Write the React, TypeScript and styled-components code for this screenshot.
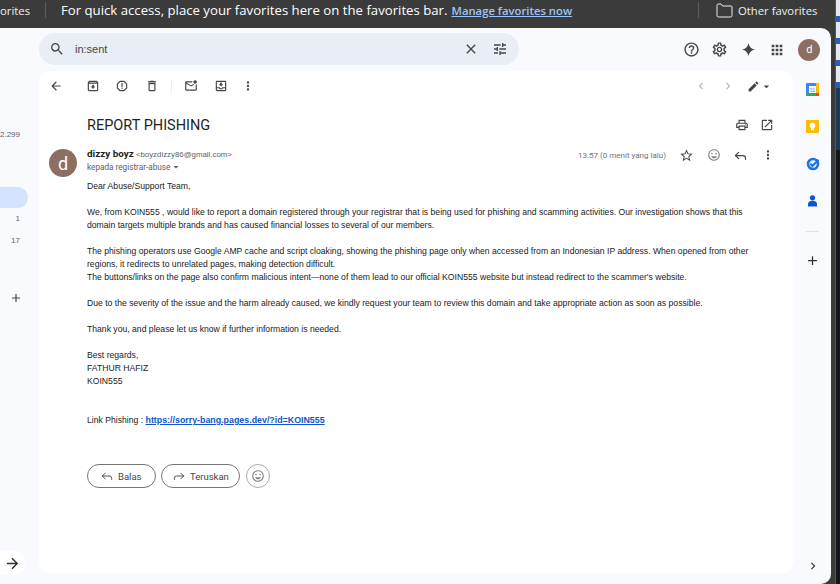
import React from "react";
import styled, { createGlobalStyle } from "styled-components";
import { Forward, Reply } from "lucide-react";
import {
  MdAdd,
  MdApps,
  MdArrowBack,
  MdArrowDropDown,
  MdArrowForward,
  MdChevronLeft,
  MdChevronRight,
  MdClose,
  MdEdit,
  MdHelpOutline,
  MdMoreVert,
  MdOpenInNew,
  MdOutlineArchive,
  MdOutlineDelete,
  MdOutlineInsertEmoticon,
  MdOutlineMarkEmailUnread,
  MdOutlineMoveToInbox,
  MdOutlineReport,
  MdOutlineSettings,
  MdOutlinePrint,
  MdSearch,
  MdStarBorder,
  MdTune
} from "react-icons/md";

const GlobalStyle = createGlobalStyle`
  html, body {
    margin: 0;
    padding: 0;
    width: 840px;
    height: 584px;
    overflow: hidden;
    background: #14181f;
  }
`;

const Screen = styled.div`
  width: 840px;
  height: 584px;
  display: flex;
  overflow: hidden;
  font-family: "Liberation Sans", Arial, sans-serif;
`;

const BrowserWindow = styled.div`
  width: 835px;
  height: 584px;
  flex: none;
  display: flex;
  flex-direction: column;
  background: #3b3b3b;
`;

const BehindWindow = styled.div`
  flex: 1;
  background: #12161d;
  border-left: 1px solid #555;
  display: flex;
  flex-direction: column;
`;

const BehindLink = styled.div`
  height: 22px;
  flex: none;
  background: #e4e8ef;
  border-bottom: 6px solid #2a5fc0;
  box-sizing: border-box;
  &:last-of-type {
    margin-bottom: 200px;
  }
`;

const BehindSelection = styled.div`
  height: 62px;
  flex: none;
  background: #1d3a58;
`;

const FavoritesBar = styled.div`
  height: 28px;
  flex: none;
  box-sizing: border-box;
  padding-bottom: 8px;
  display: flex;
  align-items: center;
  color: #fff;
  font-family: "Open Sans", sans-serif;
  font-size: 13.2px;
  background: #3b3b3b;
`;

const BarLabel = styled.span`
  width: 45px;
  font-size: 11.3px;
  color: #f0f0f0;
  flex: none;
`;

const BarDivider = styled.span`
  width: 1px;
  height: 16px;
  flex: none;
  background: #5c5c5c;
`;

const BarMessage = styled.span`
  margin-left: 15px;
  white-space: nowrap;
  width: 637px;
  flex: none;
`;

const ManageLink = styled.a`
  margin-left: 4px;
  color: #9cc4f5;
  text-decoration: underline;
  font-size: 11.3px;
  font-weight: 600;
`;

const OtherFavorites = styled.span`
  margin-left: 17px;
  display: flex;
  align-items: center;
  gap: 5px;
  font-size: 11.3px;
  white-space: nowrap;
  color: #f0f0f0;
`;

const Page = styled.div`
  flex: 1;
  margin-right: 4px;
  min-height: 0;
  display: flex;
  flex-direction: column;
  background: #f8fafd;
  border-radius: 0 10px 10px 0;
  overflow: hidden;
`;

const TopRow = styled.header`
  height: 43px;
  flex: none;
  display: flex;
  align-items: flex-start;
  padding-top: 5px;
  box-sizing: border-box;
`;

const SearchBox = styled.div`
  width: 480px;
  height: 32px;
  margin-left: 39px;
  flex: none;
  box-sizing: border-box;
  padding: 0 11px 0 10px;
  display: flex;
  align-items: center;
  border-radius: 16px;
  background: #e9eef6;
  color: #444746;
  font-size: 11px;
`;

const SearchText = styled.span`
  flex: 1;
  margin-left: 10px;
`;

const SearchActions = styled.span`
  display: flex;
  align-items: center;
  gap: 13px;
`;

const AccountIcons = styled.div`
  margin-left: 158px;
  display: flex;
  align-items: center;
  height: 33px;
  color: #444746;
`;

const AccountSlot = styled.span<{ $wide?: boolean }>`
  width: ${(p) => (p.$wide ? 36 : 28.6)}px;
  display: flex;
  justify-content: center;
`;

const Avatar = styled.span<{ $size: number; $font: number }>`
  width: ${(p) => p.$size}px;
  height: ${(p) => p.$size}px;
  flex: none;
  display: flex;
  align-items: center;
  justify-content: center;
  border-radius: 50%;
  background: #8d6e63;
  color: #fff;
  font-size: ${(p) => p.$font}px;
  font-family: Roboto, sans-serif;
`;

const Workspace = styled.div`
  flex: 1;
  min-height: 0;
  display: flex;
  padding-bottom: 11px;
`;

const Sidebar = styled.nav`
  width: 39px;
  flex: none;
  display: flex;
  flex-direction: column;
  color: #5f6368;
  font-size: 8px;
`;

const Count = styled.div<{ $top: number }>`
  margin-top: ${(p) => p.$top}px;
  width: 20px;
  height: 10px;
  line-height: 10px;
  text-align: right;
`;

const ActiveItem = styled.div`
  margin-top: 47px;
  width: 28px;
  height: 21px;
  border-radius: 0 11px 11px 0;
  background: #d3e3fd;
`;

const SidebarPlus = styled.div`
  margin: 45px 0 0 9px;
  height: 14px;
  color: #444746;
`;

const ExpandButton = styled.div`
  margin-top: auto;
  width: 25px;
  height: 24px;
  margin-bottom: -2px;
  border-radius: 0 12px 12px 0;
  background: #fff;
  display: flex;
  align-items: center;
  padding-left: 4px;
  box-sizing: border-box;
  color: #303030;
`;

const MailCard = styled.main`
  width: 755px;
  flex: none;
  display: flex;
  flex-direction: column;
  border-radius: 12px;
  background: #fff;
`;

const Toolbar = styled.div`
  height: 30px;
  flex: none;
  display: flex;
  align-items: center;
  color: #444746;
`;

const ToolIcon = styled.span<{ $left: number; $faded?: boolean }>`
  margin-left: ${(p) => p.$left}px;
  display: flex;
  color: ${(p) => (p.$faded ? "#b4b7bb" : "inherit")};
`;

const ToolDivider = styled.span`
  margin-left: 12px;
  width: 1px;
  height: 13px;
  background: #eceef0;
`;

const SubjectRow = styled.div`
  height: 45px;
  flex: none;
  display: flex;
  align-items: center;
  padding: 0 20px 0 48px;
  margin-top: 1px;
`;

const Subject = styled.h1`
  flex: 1;
  margin: 2px 0 0;
  font-family: Roboto, sans-serif;
  font-weight: 400;
  font-size: 14.5px;
  color: #1f1f1f;
`;

const SubjectActions = styled.div`
  display: flex;
  gap: 11px;
  color: #444746;
`;

const MessageArea = styled.div`
  display: flex;
  padding: 0 13px 0 10px;
`;

const SenderAvatarSlot = styled.div`
  width: 38px;
  flex: none;
  padding-top: 2px;
`;

const MessageBody = styled.div`
  flex: 1;
  min-width: 0;
`;

const SenderRow = styled.div`
  display: flex;
  align-items: flex-start;
  height: 30px;
`;

const SenderInfo = styled.div`
  flex: 1;
`;

const SenderLine = styled.div`
  height: 13px;
  line-height: 13px;
  font-size: 7.85px;
  color: #5e5e5e;
  white-space: nowrap;
`;

const SenderName = styled.span`
  font-family: Roboto, sans-serif;
  font-weight: 700;
  font-size: 9.9px;
  color: #1f1f1f;
`;

const Recipient = styled.div`
  height: 13px;
  display: flex;
  align-items: center;
  font-family: Roboto, sans-serif;
  font-size: 8.2px;
  color: #5e5e5e;
`;

const MailMeta = styled.div`
  display: flex;
  align-items: center;
  height: 18px;
  color: #444746;
  margin-top: -1px;
`;

const MailTime = styled.span`
  width: 95px;
  font-family: Roboto, sans-serif;
  font-size: 8px;
  color: #6f7276;
  white-space: nowrap;
`;

const MetaSlot = styled.span<{ $muted?: boolean }>`
  width: 27px;
  display: flex;
  justify-content: center;
  color: ${(p) => (p.$muted ? "#80868b" : "inherit")};
`;

const Letter = styled.div`
  font-size: 8.65px;
  line-height: 13px;
  color: #222;
  padding-top: 3px;
`;

const Paragraph = styled.p<{ $gap?: number }>`
  margin: 0 0 ${(p) => p.$gap ?? 13}px;
  white-space: nowrap;
`;

const PhishLink = styled.a`
  color: #1155cc;
  font-weight: 700;
  font-size: 8.85px;
  text-decoration: underline;
`;

const ReplyRow = styled.div`
  margin-top: 37px;
  display: flex;
  gap: 5px;
`;

const Pill = styled.button<{ $width: number; $pad: number }>`
  width: ${(p) => p.$width}px;
  height: 24px;
  box-sizing: border-box;
  padding: 0 0 0 ${(p) => p.$pad}px;
  display: flex;
  align-items: center;
  gap: 4px;
  border: 1px solid #747775;
  border-radius: 12px;
  background: #fff;
  color: #444746;
  font-family: Roboto, sans-serif;
  font-size: 9.5px;
`;

const EmojiPill = styled.span`
  width: 24px;
  height: 24px;
  margin-left: 1px;
  box-sizing: border-box;
  border: 1px solid #a8abae;
  border-radius: 50%;
  display: flex;
  align-items: center;
  justify-content: center;
  color: #80868b;
`;

const AddonRail = styled.aside`
  flex: 1;
  display: flex;
  flex-direction: column;
  align-items: center;
  padding-top: 12px;
`;

const AddonIcon = styled.span`
  margin-bottom: 21px;
  height: 16px;
  display: flex;
`;

const RailRule = styled.span`
  width: 13px;
  height: 1px;
  background: #dfe1e5;
  margin: 0 0 21px;
`;

const RailPlus = styled.span`
  display: flex;
  color: #303030;
`;

const RailChevron = styled.span`
  margin-top: auto;
  display: flex;
  color: #303030;
`;

const FolderIcon = () => (
  <svg width="17" height="15" viewBox="0 0 17 15" fill="none" stroke="#f0f0f0" strokeWidth="1">
    <path d="M1 3.500V2.500A1.500 1.500 0 0 1 2.500 1H5l1.500 2H15A1 1 0 0 1 16 4v8.500a1.500 1.500 0 0 1-1.500 1.500h-12A1.500 1.500 0 0 1 1 12.500z" />
  </svg>
);

const SparkIcon = () => (
  <svg width="15" height="15" viewBox="0 0 24 24" fill="#444746">
    <path d="M12 1c.8 6.200 4.800 10.200 11 11-6.200.8-10.200 4.800-11 11-.8-6.200-4.800-10.200-11-11 6.200-.8 10.200-4.800 11-11z" />
  </svg>
);

const CalendarIcon = () => (
  <svg width="13" height="13" viewBox="0 0 13 13">
    <rect x="0" y="0" width="13" height="13" rx="1" fill="#4285f4" />
    <rect x="3" y="3" width="7" height="7" fill="#fff" />
    <rect x="10" y="0" width="3" height="10" fill="#fbbc04" />
    <rect x="0" y="10" width="10" height="3" fill="#34a853" />
    <rect x="10" y="10" width="3" height="3" fill="#ea4335" />
    <text x="6.500" y="8.800" fontSize="5" textAnchor="middle" fill="#4285f4" fontFamily="Liberation Sans">
      31
    </text>
  </svg>
);

const KeepIcon = () => (
  <svg width="13" height="13" viewBox="0 0 13 13">
    <rect width="13" height="13" rx="1" fill="#fbbc04" />
    <circle cx="6.500" cy="5.600" r="2.800" fill="#fff" />
    <rect x="5" y="8.200" width="3" height="2" fill="#fff" />
  </svg>
);

const TasksIcon = () => (
  <svg width="14" height="14" viewBox="0 0 14 14">
    <circle cx="7" cy="7" r="5" fill="none" stroke="#1a73e8" strokeWidth="2.600" />
    <path d="M4.300 6.800 6.500 9l6-6.300" fill="none" stroke="#1a73e8" strokeWidth="2" />
  </svg>
);

const ContactsIcon = () => (
  <svg width="13" height="14" viewBox="0 0 13 14" fill="#0b57d0">
    <circle cx="6.500" cy="3.800" r="2.600" />
    <path d="M2 12.500V10c0-2 2-3.200 4.500-3.200S11 8 11 10v2.500z" />
  </svg>
);

export default function App(): React.JSX.Element {
  return (
    <>
      <GlobalStyle />
      <Screen>
        <BrowserWindow>
          <FavoritesBar>
            <BarLabel>orites</BarLabel>
            <BarDivider />
            <BarMessage>
              For quick access, place your favorites here on the favorites bar.
              <ManageLink>Manage favorites now</ManageLink>
            </BarMessage>
            <BarDivider />
            <OtherFavorites>
              <FolderIcon />
              Other favorites
            </OtherFavorites>
          </FavoritesBar>
          <Page>
            <TopRow>
              <SearchBox>
                <MdSearch size={16} />
                <SearchText>in:sent</SearchText>
                <SearchActions>
                  <MdClose size={16} />
                  <MdTune size={16} />
                </SearchActions>
              </SearchBox>
              <AccountIcons>
                <AccountSlot>
                  <MdHelpOutline size={17} />
                </AccountSlot>
                <AccountSlot>
                  <MdOutlineSettings size={17} />
                </AccountSlot>
                <AccountSlot>
                  <SparkIcon />
                </AccountSlot>
                <AccountSlot>
                  <MdApps size={16} />
                </AccountSlot>
                <AccountSlot $wide>
                  <Avatar $size={22} $font={11}>
                    d
                  </Avatar>
                </AccountSlot>
              </AccountIcons>
            </TopRow>
            <Workspace>
              <Sidebar>
                <Count $top={59}>2.299</Count>
                <ActiveItem />
                <Count $top={6}>1</Count>
                <Count $top={12}>17</Count>
                <SidebarPlus>
                  <MdAdd size={14} />
                </SidebarPlus>
                <ExpandButton>
                  <MdArrowForward size={17} />
                </ExpandButton>
              </Sidebar>
              <MailCard>
                <Toolbar>
                  <ToolIcon $left={10}>
                    <MdArrowBack size={14} />
                  </ToolIcon>
                  <ToolIcon $left={23}>
                    <MdOutlineArchive size={14} />
                  </ToolIcon>
                  <ToolIcon $left={15}>
                    <MdOutlineReport size={14} />
                  </ToolIcon>
                  <ToolIcon $left={16}>
                    <MdOutlineDelete size={14} />
                  </ToolIcon>
                  <ToolDivider />
                  <ToolIcon $left={12}>
                    <MdOutlineMarkEmailUnread size={14} />
                  </ToolIcon>
                  <ToolIcon $left={16}>
                    <MdOutlineMoveToInbox size={14} />
                  </ToolIcon>
                  <ToolIcon $left={13}>
                    <MdMoreVert size={14} />
                  </ToolIcon>
                  <ToolIcon $left={439} $faded>
                    <MdChevronLeft size={14} />
                  </ToolIcon>
                  <ToolIcon $left={13} $faded>
                    <MdChevronRight size={14} />
                  </ToolIcon>
                  <ToolIcon $left={12}>
                    <MdEdit size={13} />
                  </ToolIcon>
                  <ToolIcon $left={0}>
                    <MdArrowDropDown size={13} />
                  </ToolIcon>
                </Toolbar>
                <SubjectRow>
                  <Subject>REPORT PHISHING</Subject>
                  <SubjectActions>
                    <MdOutlinePrint size={14} />
                    <MdOpenInNew size={14} />
                  </SubjectActions>
                </SubjectRow>
                <MessageArea>
                  <SenderAvatarSlot>
                    <Avatar $size={28} $font={18}>
                      d
                    </Avatar>
                  </SenderAvatarSlot>
                  <MessageBody>
                    <SenderRow>
                      <SenderInfo>
                        <SenderLine>
                          <SenderName>dizzy boyz</SenderName> &lt;boyzdizzy86@gmail.com&gt;
                        </SenderLine>
                        <Recipient>
                          kepada registrar-abuse
                          <MdArrowDropDown size={12} />
                        </Recipient>
                      </SenderInfo>
                      <MailMeta>
                        <MailTime>13.57 (0 menit yang lalu)</MailTime>
                        <MetaSlot>
                          <MdStarBorder size={15} />
                        </MetaSlot>
                        <MetaSlot $muted>
                          <MdOutlineInsertEmoticon size={14} />
                        </MetaSlot>
                        <MetaSlot>
                          <Reply size={15} strokeWidth={2} />
                        </MetaSlot>
                        <MetaSlot>
                          <MdMoreVert size={14} />
                        </MetaSlot>
                      </MailMeta>
                    </SenderRow>
                    <Letter>
                      <Paragraph>Dear Abuse/Support Team,</Paragraph>
                      <Paragraph>
                        We, from KOIN555 , would like to report a domain registered through your registrar that is being used for phishing and scamming activities. Our investigation shows that this
                        <br />
                        domain targets multiple brands and has caused financial losses to several of our members.
                      </Paragraph>
                      <Paragraph>
                        The phishing operators use Google AMP cache and script cloaking, showing the phishing page only when accessed from an Indonesian IP address. When opened from other
                        <br />
                        regions, it redirects to unrelated pages, making detection difficult.
                        <br />
                        The buttons/links on the page also confirm malicious intent—none of them lead to our official KOIN555 website but instead redirect to the scammer's website.
                      </Paragraph>
                      <Paragraph>
                        Due to the severity of the issue and the harm already caused, we kindly request your team to review this domain and take appropriate action as soon as possible.
                      </Paragraph>
                      <Paragraph>Thank you, and please let us know if further information is needed.</Paragraph>
                      <Paragraph $gap={26}>
                        Best regards,
                        <br />
                        FATHUR HAFIZ
                        <br />
                        KOIN555
                      </Paragraph>
                      <Paragraph $gap={0}>
                        Link Phishing : <PhishLink>https://sorry-bang.pages.dev/?id=KOIN555</PhishLink>
                      </Paragraph>
                    </Letter>
                    <ReplyRow>
                      <Pill $width={69} $pad={12}>
                        <Reply size={14} strokeWidth={1.6} />
                        Balas
                      </Pill>
                      <Pill $width={79} $pad={10}>
                        <Forward size={14} strokeWidth={1.6} />
                        Teruskan
                      </Pill>
                      <EmojiPill>
                        <MdOutlineInsertEmoticon size={14} />
                      </EmojiPill>
                    </ReplyRow>
                  </MessageBody>
                </MessageArea>
              </MailCard>
              <AddonRail>
                <AddonIcon>
                  <CalendarIcon />
                </AddonIcon>
                <AddonIcon>
                  <KeepIcon />
                </AddonIcon>
                <AddonIcon>
                  <TasksIcon />
                </AddonIcon>
                <AddonIcon>
                  <ContactsIcon />
                </AddonIcon>
                <RailRule />
                <RailPlus>
                  <MdAdd size={15} />
                </RailPlus>
                <RailChevron>
                  <MdChevronRight size={14} />
                </RailChevron>
              </AddonRail>
            </Workspace>
          </Page>
        </BrowserWindow>
        <BehindWindow>
          <BehindLink />
          <BehindLink />
          <BehindLink />
          <BehindLink />
          <BehindSelection />
        </BehindWindow>
      </Screen>
    </>
  );
}
